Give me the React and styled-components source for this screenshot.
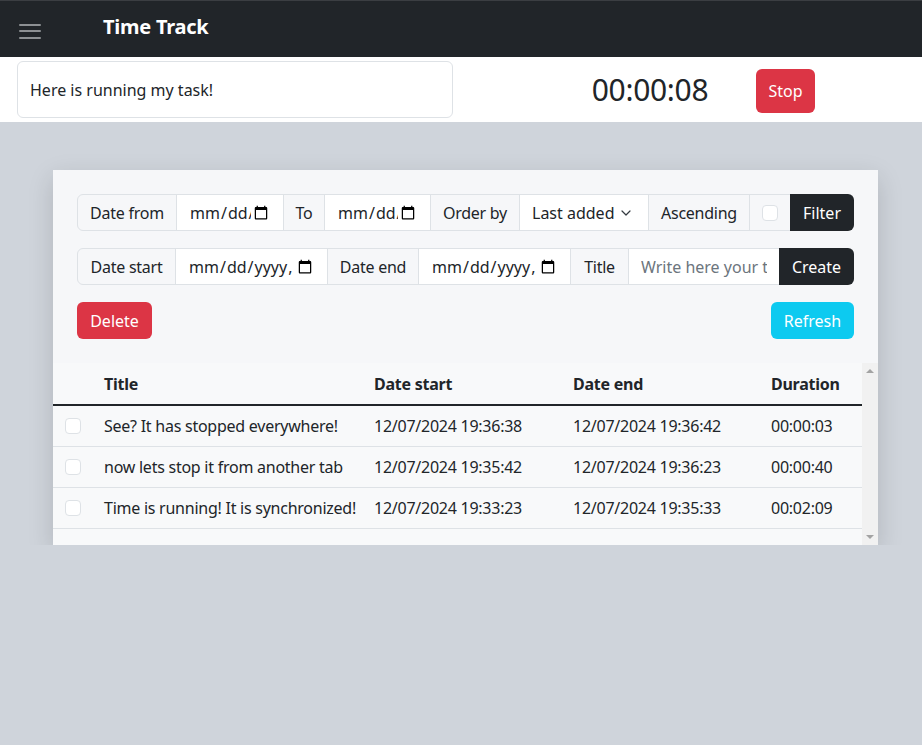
import React, { useState } from "react";
import styled, { createGlobalStyle } from "styled-components";
import { ChevronDown } from "lucide-react";

const GlobalStyle = createGlobalStyle`
  * {
    box-sizing: border-box;
  }
  body {
    margin: 0;
    background: #cfd4db;
    font-family: "Noto Sans", "Open Sans", sans-serif;
    font-size: 16px;
    letter-spacing: -0.25px;
    color: #212529;
  }
`;

const tasks = [
  { id: 1, title: "See? It has stopped everywhere!", start: "12/07/2024 19:36:38", end: "12/07/2024 19:36:42", duration: "00:00:03" },
  { id: 2, title: "now lets stop it from another tab", start: "12/07/2024 19:35:42", end: "12/07/2024 19:36:23", duration: "00:00:40" },
  { id: 3, title: "Time is running! It is synchronized!", start: "12/07/2024 19:33:23", end: "12/07/2024 19:35:33", duration: "00:02:09" },
];

const App = () => {
  const [task, setTask] = useState("Here is running my task!");

  return (
    <React.Fragment>
      <GlobalStyle />
      <Navbar>
        <Toggler aria-label="menu">
          <span />
          <span />
          <span />
        </Toggler>
        <Brand>Time Track</Brand>
      </Navbar>

      <TimerBar>
        <TaskInput value={task} onChange={(e) => setTask(e.target.value)} />
        <Timer>00:00:08</Timer>
        <StopBtn>Stop</StopBtn>
      </TimerBar>

      <Card>
        <Controls>
          <Group>
            <Label $w={99}>Date from</Label>
            <Field type="date" $w={107} />
            <Label $w={41}>To</Label>
            <Field type="date" $w={106} />
            <Label $w={89}>Order by</Label>
            <SelectWrap>
              <Select defaultValue="last">
                <option value="last">Last added</option>
                <option value="first">First added</option>
              </Select>
              <ChevronDown size={16} strokeWidth={1.8} />
            </SelectWrap>
            <Label $w={101}>Ascending</Label>
            <Label $w={41}>
              <Check type="checkbox" />
            </Label>
            <GroupBtn $w={64}>Filter</GroupBtn>
          </Group>

          <Group>
            <Label $w={98}>Date start</Label>
            <Field type="datetime-local" $w={152} />
            <Label $w={91}>Date end</Label>
            <Field type="datetime-local" $w={152} />
            <Label $w={58}>Title</Label>
            <Field type="text" $w={151} placeholder="Write here your task..." />
            <GroupBtn $w={75}>Create</GroupBtn>
          </Group>

          <Actions>
            <Btn $color="#dc3545" $w={75}>Delete</Btn>
            <Btn $color="#0dcaf0" $w={83}>Refresh</Btn>
          </Actions>
        </Controls>

        <TableBox>
          <TableScroll>
            <Table>
              <colgroup>
                <col style={{ width: 43 }} />
                <col style={{ width: 270 }} />
                <col style={{ width: 199 }} />
                <col style={{ width: 198 }} />
                <col />
              </colgroup>
              <thead>
                <tr>
                  <Th />
                  <Th>Title</Th>
                  <Th>Date start</Th>
                  <Th>Date end</Th>
                  <Th>Duration</Th>
                </tr>
              </thead>
              <tbody>
                {tasks.map((t) => (
                  <tr key={t.id}>
                    <Td $check>
                      <Check type="checkbox" />
                    </Td>
                    <Td>{t.title}</Td>
                    <Td>{t.start}</Td>
                    <Td>{t.end}</Td>
                    <Td>{t.duration}</Td>
                  </tr>
                ))}
              </tbody>
            </Table>
          </TableScroll>
          <ScrollTrack>
            <svg width="16" height="16" viewBox="0 0 16 16">
              <path d="M4 10h8L8 6z" fill="#a3a3a3" />
            </svg>
            <svg width="16" height="16" viewBox="0 0 16 16">
              <path d="M4 6h8L8 10z" fill="#a3a3a3" />
            </svg>
          </ScrollTrack>
        </TableBox>
      </Card>
    </React.Fragment>
  );
};

const Navbar = styled.nav`
  height: 57px;
  background: #212529;
  border-top: 1px solid #3b3e42;
  display: flex;
  align-items: center;
  padding-left: 19px;
`;

const Toggler = styled.button`
  width: 22px;
  height: 15px;
  padding: 0;
  margin-top: 4px;
  border: 0;
  background: none;
  display: flex;
  flex-direction: column;
  justify-content: space-between;
  span {
    display: block;
    height: 2px;
    background: #8d9093;
    border-radius: 1px;
  }
`;

const Brand = styled.div`
  margin-left: 62px;
  margin-bottom: 6px;
  color: #fff;
  font-size: 20px;
  font-weight: 700;
`;

const TimerBar = styled.div`
  height: 65px;
  background: #fff;
  display: flex;
  align-items: center;
  padding-left: 17px;
`;

const TaskInput = styled.input`
  width: 436px;
  height: 57px;
  padding: 0 12px;
  border: 1px solid #dee2e6;
  border-radius: 6px;
  font: inherit;
  color: #212529;
  outline: none;
`;

const Timer = styled.div`
  width: 174px;
  margin-left: 110px;
  text-align: center;
  font-size: 30px;
  letter-spacing: -0.3px;
`;

const Btn = styled.button`
  height: 37px;
  width: ${(p) => p.$w}px;
  border: 0;
  border-radius: 6px;
  background: ${(p) => p.$color};
  color: #fff;
  font: inherit;
  cursor: pointer;
`;

const StopBtn = styled(Btn).attrs({ $color: "#dc3545", $w: 59 })`
  height: 44px;
  margin-left: 19px;
  margin-top: 2px;
`;

const Card = styled.section`
  margin: 48px 44px 0 53px;
  background: #f6f7f9;
  box-shadow: 0 8px 24px rgba(0, 0, 0, 0.15);
`;

const Controls = styled.div`
  padding: 24px 24px 0;
  display: flex;
  flex-direction: column;
  gap: 17px;
`;

const Group = styled.div`
  display: flex;
  height: 37px;
  > * + * {
    margin-left: -1px;
  }
  > :first-child {
    border-radius: 6px 0 0 6px;
  }
  > :last-child {
    border-radius: 0 6px 6px 0;
  }
`;

const Label = styled.span`
  width: ${(p) => p.$w + 1}px;
  flex: none;
  display: flex;
  align-items: center;
  justify-content: center;
  background: #f6f7f9;
  border: 1px solid #dee2e6;
  white-space: nowrap;
`;

const Field = styled.input`
  width: ${(p) => p.$w + 1}px;
  flex: none;
  height: 37px;
  padding: 0 12px;
  border: 1px solid #dee2e6;
  border-radius: 0;
  background: #fff;
  font: inherit;
  color: #212529;
  outline: none;
  &::placeholder {
    color: #6c757d;
  }
`;

const SelectWrap = styled.div`
  position: relative;
  width: 130px;
  flex: none;
  svg {
    position: absolute;
    right: 15px;
    top: 11px;
    color: #343a40;
    pointer-events: none;
  }
`;

const Select = styled.select`
  appearance: none;
  width: 100%;
  height: 37px;
  padding: 0 28px 0 12px;
  border: 1px solid #dee2e6;
  border-radius: 0;
  background: #fff;
  font: inherit;
  color: #212529;
  outline: none;
`;

const Check = styled.input`
  appearance: none;
  width: 16px;
  height: 16px;
  margin: 0;
  border: 1px solid #dee2e6;
  border-radius: 4px;
  background: #fff;
`;

const GroupBtn = styled.button`
  width: ${(p) => p.$w}px;
  flex: none;
  border: 0;
  background: #212529;
  color: #fff;
  font: inherit;
`;

const Actions = styled.div`
  display: flex;
  justify-content: space-between;
`;

const TableBox = styled.div`
  margin-top: 24px;
  height: 182px;
  display: flex;
  background: #f8f9fa;
`;

const TableScroll = styled.div`
  flex: 1;
  overflow: hidden;
`;

const ScrollTrack = styled.div`
  width: 16px;
  flex: none;
  background: #f1f1f1;
  display: flex;
  flex-direction: column;
  justify-content: space-between;
`;

const Table = styled.table`
  width: 100%;
  border-collapse: collapse;
  table-layout: fixed;
`;

const Th = styled.th`
  height: 42px;
  padding: 0 8px;
  text-align: left;
  font-weight: 700;
  border-bottom: 2px solid #212529;
`;

const Td = styled.td`
  height: 41px;
  padding: 0 8px 0 ${(p) => (p.$check ? "12px" : "8px")};
  border-bottom: 1px solid #dee2e6;
  white-space: nowrap;
  vertical-align: middle;
  input {
    display: block;
  }
`;

export default App;
